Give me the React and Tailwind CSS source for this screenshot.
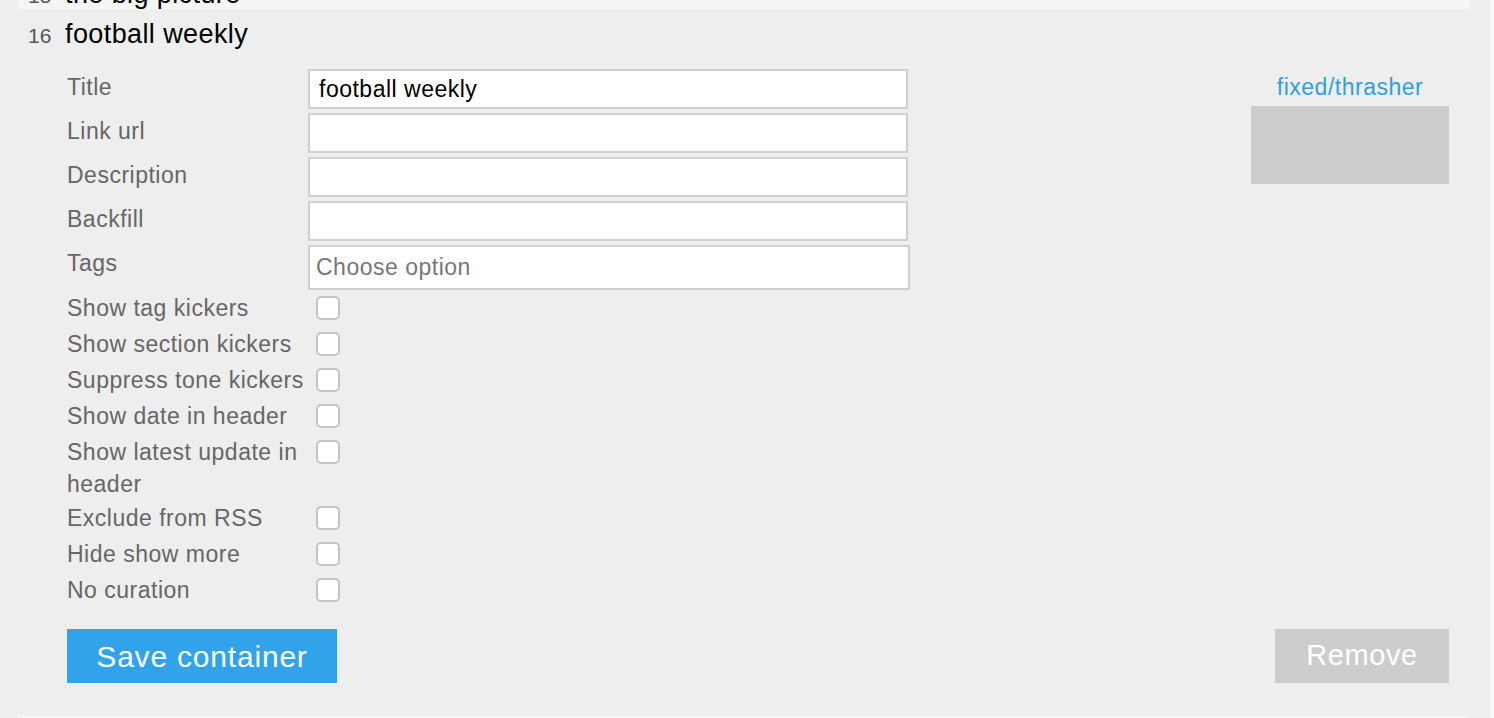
import React, { useState } from 'react';

const textFields = [
    { key: 'title', label: 'Title', value: 'football weekly' },
    { key: 'href', label: 'Link url', value: '' },
    { key: 'description', label: 'Description', value: '' },
    { key: 'backfill', label: 'Backfill', value: '' },
];

const checkFields = [
    'Show tag kickers',
    'Show section kickers',
    'Suppress tone kickers',
    'Show date in header',
    'Show latest update in header',
    'Exclude from RSS',
    'Hide show more',
    'No curation',
];

const font = "font-['Liberation_Sans',Arial,sans-serif]";

const ContainerEditor = () => {
    const [values, setValues] = useState(
        Object.fromEntries(textFields.map(f => [f.key, f.value]))
    );
    const [checks, setChecks] = useState({});

    return (
        <div className="mt-0">
            {/* header */}
            <div className="flex items-baseline h-[50px] leading-[50px]">
                <span className="w-[47px] pl-[10px] text-[21px] text-[#555]">16</span>
                <span className="text-[27px] tracking-[0.4px] text-black">football weekly</span>
            </div>

            <div className="flex mt-[10px] pl-[49px] pr-[41px]">
                {/* form */}
                <div className="flex-1">
                    {textFields.map(f => (
                        <div key={f.key} className="flex mb-[4px]">
                            <label className="w-[241px] text-[23px] tracking-[0.5px] leading-[36px] text-[#666]">
                                {f.label}
                            </label>
                            <input
                                value={values[f.key]}
                                onChange={(e) => setValues({ ...values, [f.key]: e.target.value })}
                                className="w-[600px] h-[40px] bg-white border-2 border-[#d0d0d0] px-[9px] text-[23px] tracking-[0.5px] text-black outline-none"
                            />
                        </div>
                    ))}
                    <div className="flex">
                        <label className="w-[241px] text-[23px] tracking-[0.5px] leading-[36px] text-[#666]">Tags</label>
                        <div className="w-[602px] h-[45px] bg-white border-2 border-[#d0d0d0] px-[6px] flex items-center text-[23px] tracking-[0.5px] text-[#777]">
                            Choose option
                        </div>
                    </div>

                    {checkFields.map(label => (
                        <div key={label} className="flex items-start min-h-[36px]">
                            <label className="w-[249px] text-[23px] tracking-[0.5px] leading-[32px] pt-[2px] text-[#666]">
                                {label}
                            </label>
                            <button
                                onClick={() => setChecks({ ...checks, [label]: !checks[label] })}
                                className={`mt-[6px] w-[24px] h-[24px] rounded-[5px] border-2 border-[#c4c4c4] ${checks[label] ? 'bg-[#31a3ea]' : 'bg-white'}`}
                            />
                        </div>
                    ))}

                    <div className="mt-[21px]">
                        <button className="w-[270px] h-[54px] bg-[#31a3ea] text-white text-[30px] tracking-[0.8px]">
                            Save container
                        </button>
                    </div>
                </div>

                {/* right panel */}
                <div className="w-[198px] flex flex-col items-end">
                    <div className="w-full text-center text-[23px] tracking-[0.5px] leading-[36px] text-[#2f9fe2]">
                        fixed/thrasher
                    </div>
                    <div className="w-full h-[78px] mt-[1px] bg-[#cccccc]" />
                    <div className="flex-1" />
                    <button className="w-[174px] h-[54px] bg-[#cccccc] text-white text-[29px] tracking-[0.6px]">
                        Remove
                    </button>
                </div>
            </div>
        </div>
    );
};

export default function App() {
    return (
        <div className={`flex w-full h-[718px] overflow-hidden ${font}`}>
            <div className="flex-1 bg-[#eeeeee] pl-[18px] flex flex-col">
                {/* previous collapsed item, mostly scrolled out */}
                <div className="w-[1452px] h-[9px] overflow-hidden bg-[#f5f5f5]">
                    <div className="flex items-baseline h-[50px] leading-[50px] -mt-[31px]">
                        <span className="w-[47px] pl-[10px] text-[21px] text-[#555]">15</span>
                        <span className="text-[27px] tracking-[0.4px] text-black">the big picture</span>
                    </div>
                </div>

                <ContainerEditor />

                <div className="flex-1" />
                {/* next item */}
                <div className="w-[1450px] h-[3px] bg-[#f5f5f5]" />
            </div>
            <div className="w-[4px] bg-[#f7f7f7]" />
        </div>
    );
}
